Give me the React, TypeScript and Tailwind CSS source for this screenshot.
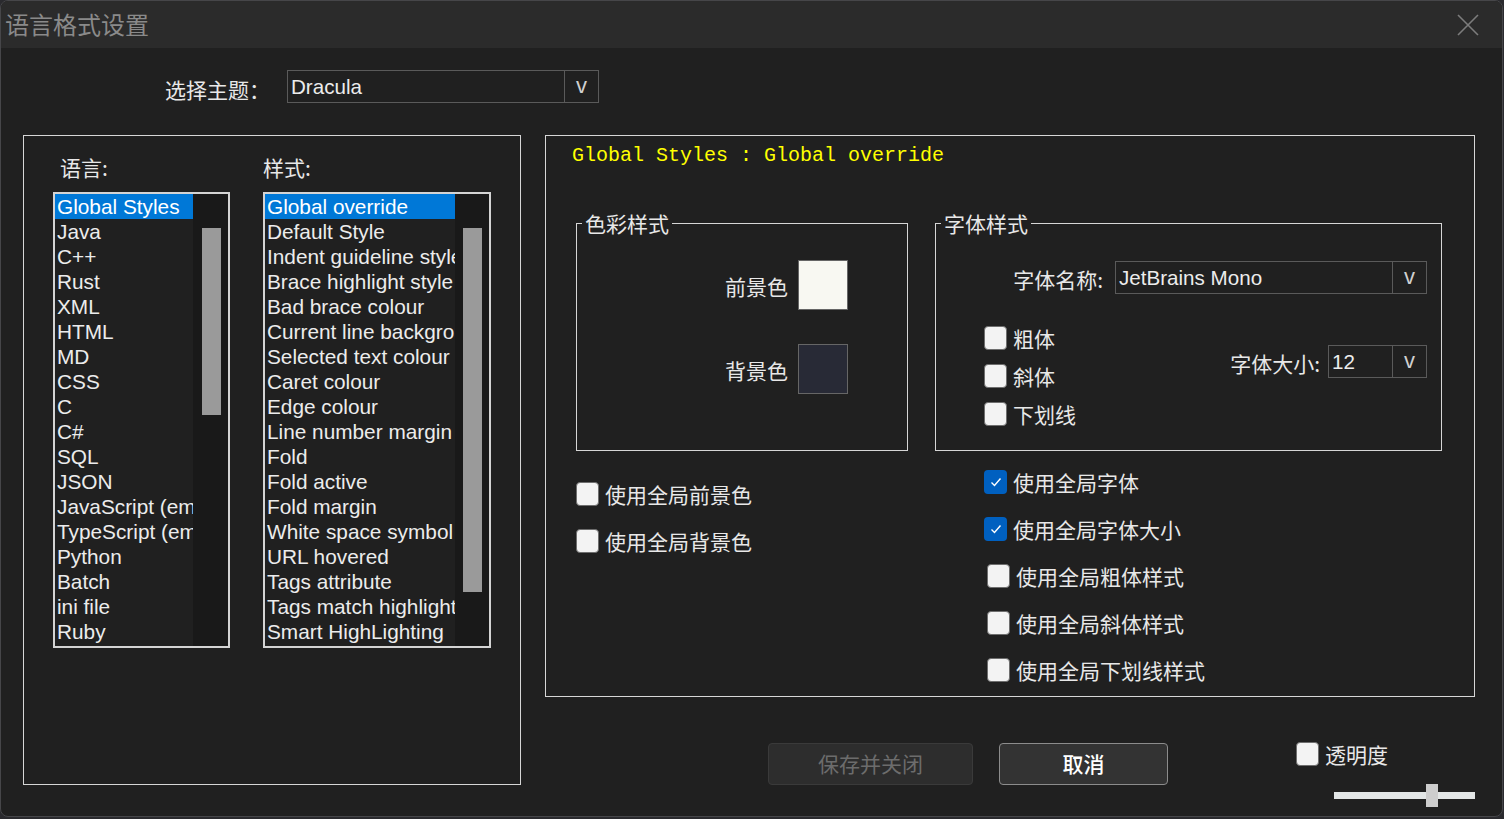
import React from "react";

const langs = [
  "Global Styles", "Java", "C++", "Rust", "XML", "HTML", "MD", "CSS", "C", "C#", "SQL", "JSON",
  "JavaScript (embedded)", "TypeScript (embedded)", "Python", "Batch", "ini file", "Ruby",
];

const styles = [
  "Global override", "Default Style", "Indent guideline style", "Brace highlight style", "Bad brace colour",
  "Current line background colour", "Selected text colour", "Caret colour", "Edge colour", "Line number margin",
  "Fold", "Fold active", "Fold margin", "White space symbol", "URL hovered", "Tags attribute",
  "Tags match highlighting", "Smart HighLighting",
];

function Combo({ text, w }: { text: string; w: string }) {
  return (
    <div className={`${w} h-[33px] border border-[#5a5a5a] flex items-stretch`}>
      <div className="flex-1 pl-[3px] flex items-center text-[20.6px] leading-[24px] text-[#ececec] font-['Liberation_Sans',sans-serif] overflow-hidden whitespace-nowrap">
        {text}
      </div>
      <div className="w-[34px] border-l border-[#5a5a5a] flex items-center justify-center text-[22px] leading-[24px] text-[#d0d0d0] font-['Liberation_Sans',sans-serif] pb-[2px]">
        v
      </div>
    </div>
  );
}

function Check({ label, checked = false, cls = "" }: { label: string; checked?: boolean; cls?: string }) {
  return (
    <div className={`flex items-center h-[24px] ${cls}`}>
      {checked ? (
        <div className="w-[23px] h-[24px] rounded-[4px] bg-[#0060c0] flex items-center justify-center">
          <svg width="16" height="16" viewBox="0 0 16 16">
            <polyline points="3.5,8.5 6.5,11.5 12.5,4.5" fill="none" stroke="#ffffff" strokeWidth="1.4" />
          </svg>
        </div>
      ) : (
        <div className="w-[23px] h-[24px] rounded-[4px] bg-[#f3f3f3] border border-[#6e6e6e]" />
      )}
      <span className="ml-[6px] text-[21px] leading-[24px] text-[#e8e8e8] font-['Noto_Sans_CJK_SC',sans-serif] whitespace-nowrap">
        {label}
      </span>
    </div>
  );
}

function ListBox({
  items, w, contentW, thumbMl, thumbH,
}: { items: string[]; w: string; contentW: string; thumbMl: string; thumbH: string }) {
  return (
    <div className={`${w} h-[456px] border-2 border-[#d4d4d4] flex overflow-hidden bg-[#202020]`}>
      <div className={`${contentW} flex flex-col overflow-hidden`}>
        {items.map((it, i) => (
          <div
            key={it}
            className={`h-[25px] shrink-0 pl-[2px] flex items-center whitespace-nowrap overflow-hidden text-[20.8px] leading-[24px] font-['Liberation_Sans',sans-serif] ${
              i === 0 ? "bg-[#0078d7] text-white" : "text-[#ececec]"
            }`}
          >
            {it}
          </div>
        ))}
      </div>
      <div className="flex-1 bg-[#191919] pt-[34px]">
        <div className={`${thumbMl} w-[19px] ${thumbH} bg-[#9a9a9a]`} />
      </div>
    </div>
  );
}

export default function App() {
  return (
    <div className="w-[1504px] h-[819px] bg-[#2a2a2e] font-['Noto_Sans_CJK_SC',sans-serif]">
      <div className="w-[1503px] h-[817px] rounded-[8px] border border-[#464649] bg-[#202020] overflow-hidden flex flex-col">
        {/* Title bar */}
        <div className="h-[47px] shrink-0 bg-[#2b2b2b] flex items-center justify-between pl-[4px] pr-[23px]">
          <span className="text-[24px] leading-[28px] text-[#8a8a8a] font-['Noto_Sans_CJK_SC',sans-serif] pb-[2px]">
            语言格式设置
          </span>
          <svg width="22" height="22" viewBox="0 0 22 22">
            <path d="M1 1 L21 21 M21 1 L1 21" stroke="#7c7c7c" strokeWidth="1.6" fill="none" />
          </svg>
        </div>

        {/* Body */}
        <div className="flex-1 pl-[22px]">
          {/* Theme row */}
          <div className="mt-[22px] flex items-center">
            <div className="ml-[142px] w-[122px] pt-[4px] text-[21px] leading-[24px] text-[#e8e8e8] font-['Noto_Sans_CJK_SC',sans-serif]">
              选择主题：
            </div>
            <Combo text="Dracula" w="w-[312px]" />
          </div>

          {/* Main row */}
          <div className="mt-[32px] flex items-start">
            {/* Left panel */}
            <div className="w-[498px] h-[650px] border border-[#d6d6d6] pl-[29px] pt-[19px]">
              <div className="flex gap-[33px]">
                <div className="flex flex-col">
                  <div className="ml-[7px] h-[24px] mb-[13px] text-[21px] leading-[24px] text-[#e8e8e8] font-['Noto_Sans_CJK_SC',sans-serif]">
                    语言:
                  </div>
                  <ListBox items={langs} w="w-[177px]" contentW="w-[138px]" thumbMl="ml-[9px]" thumbH="h-[187px]" />
                </div>
                <div className="flex flex-col">
                  <div className="h-[24px] mb-[13px] text-[21px] leading-[24px] text-[#e8e8e8] font-['Noto_Sans_CJK_SC',sans-serif]">
                    样式:
                  </div>
                  <ListBox items={styles} w="w-[228px]" contentW="w-[190px]" thumbMl="ml-[8px]" thumbH="h-[364px]" />
                </div>
              </div>
            </div>

            {/* Right column */}
            <div className="ml-[24px] flex flex-col">
              <div className="w-[930px] h-[562px] border border-[#d6d6d6]">
                <div className="pl-[26px] pt-[8px] h-[31px] text-[20px] leading-[24px] text-[#ffff00] font-['Liberation_Mono',monospace] whitespace-pre">
                  Global Styles : Global override
                </div>

                {/* Group boxes */}
                <div className="mt-[56px] pl-[30px] flex">
                  <div className="relative w-[332px] h-[228px] border border-[#d6d6d6]">
                    <span className="absolute left-[5px] top-[-13px] px-[3px] bg-[#202020] text-[21px] leading-[24px] text-[#e8e8e8] font-['Noto_Sans_CJK_SC',sans-serif]">
                      色彩样式
                    </span>
                    <div className="pt-[36px] pr-[59px] flex flex-col items-end gap-[34px]">
                      <div className="flex items-center gap-[10px]">
                        <span className="text-[21px] leading-[24px] text-[#e8e8e8] pt-[2px]">前景色</span>
                        <div className="w-[50px] h-[50px] border border-[#666666] bg-[#f8f8f2]" />
                      </div>
                      <div className="flex items-center gap-[10px]">
                        <span className="text-[21px] leading-[24px] text-[#e8e8e8] pt-[2px]">背景色</span>
                        <div className="w-[50px] h-[50px] border border-[#666666] bg-[#282a36]" />
                      </div>
                    </div>
                  </div>

                  <div className="relative ml-[27px] w-[507px] h-[228px] border border-[#d6d6d6]">
                    <span className="absolute left-[5px] top-[-13px] px-[3px] bg-[#202020] text-[21px] leading-[24px] text-[#e8e8e8] font-['Noto_Sans_CJK_SC',sans-serif]">
                      字体样式
                    </span>
                    <div className="pt-[37px] pr-[14px] flex justify-end items-center gap-[12px]">
                      <span className="text-[21px] leading-[24px] text-[#e8e8e8] pt-[2px]">字体名称:</span>
                      <Combo text="JetBrains Mono" w="w-[312px]" />
                    </div>
                    <div className="mt-[32px] flex justify-between pr-[14px]">
                      <div className="pl-[48px] flex flex-col gap-[14px]">
                        <Check label="粗体" />
                        <Check label="斜体" />
                        <Check label="下划线" />
                      </div>
                      <div className="mt-[19px] flex items-center gap-[8px] h-[33px]">
                        <span className="text-[21px] leading-[24px] text-[#e8e8e8] pt-[2px]">字体大小:</span>
                        <Combo text="12" w="w-[99px]" />
                      </div>
                    </div>
                  </div>
                </div>

                {/* Global checkboxes */}
                <div className="pl-[30px] flex">
                  <div className="w-[408px] pt-[31px] flex flex-col gap-[23px]">
                    <Check label="使用全局前景色" />
                    <Check label="使用全局背景色" />
                  </div>
                  <div className="pt-[19px] flex flex-col gap-[23px]">
                    <Check label="使用全局字体" checked />
                    <Check label="使用全局字体大小" checked />
                    <Check label="使用全局粗体样式" cls="ml-[3px]" />
                    <Check label="使用全局斜体样式" cls="ml-[3px]" />
                    <Check label="使用全局下划线样式" cls="ml-[3px]" />
                  </div>
                </div>
              </div>

              {/* Buttons row */}
              <div className="mt-[46px] flex items-start">
                <div className="ml-[223px] w-[205px] h-[42px] rounded-[4px] bg-[#2d2d2d] border border-[#3a3a3a] flex items-center justify-center text-[21px] text-[#6c6c6c]">
                  保存并关闭
                </div>
                <div className="ml-[26px] w-[169px] h-[42px] rounded-[4px] bg-[#333333] border border-[#8c8c8c] flex items-center justify-center text-[21px] text-white font-medium">
                  取消
                </div>
                <div className="ml-[128px] -mt-[1px] flex flex-col">
                  <Check label="透明度" />
                  <div className="relative mt-[18px] ml-[38px] w-[141px] h-[23px]">
                    <div className="mt-[8px] h-[7px] bg-[#e3e6e6]" />
                    <div className="absolute left-[92px] top-0 w-[12px] h-[23px] bg-[#cdcdcd]" />
                  </div>
                </div>
              </div>
            </div>
          </div>
        </div>
      </div>
    </div>
  );
}
